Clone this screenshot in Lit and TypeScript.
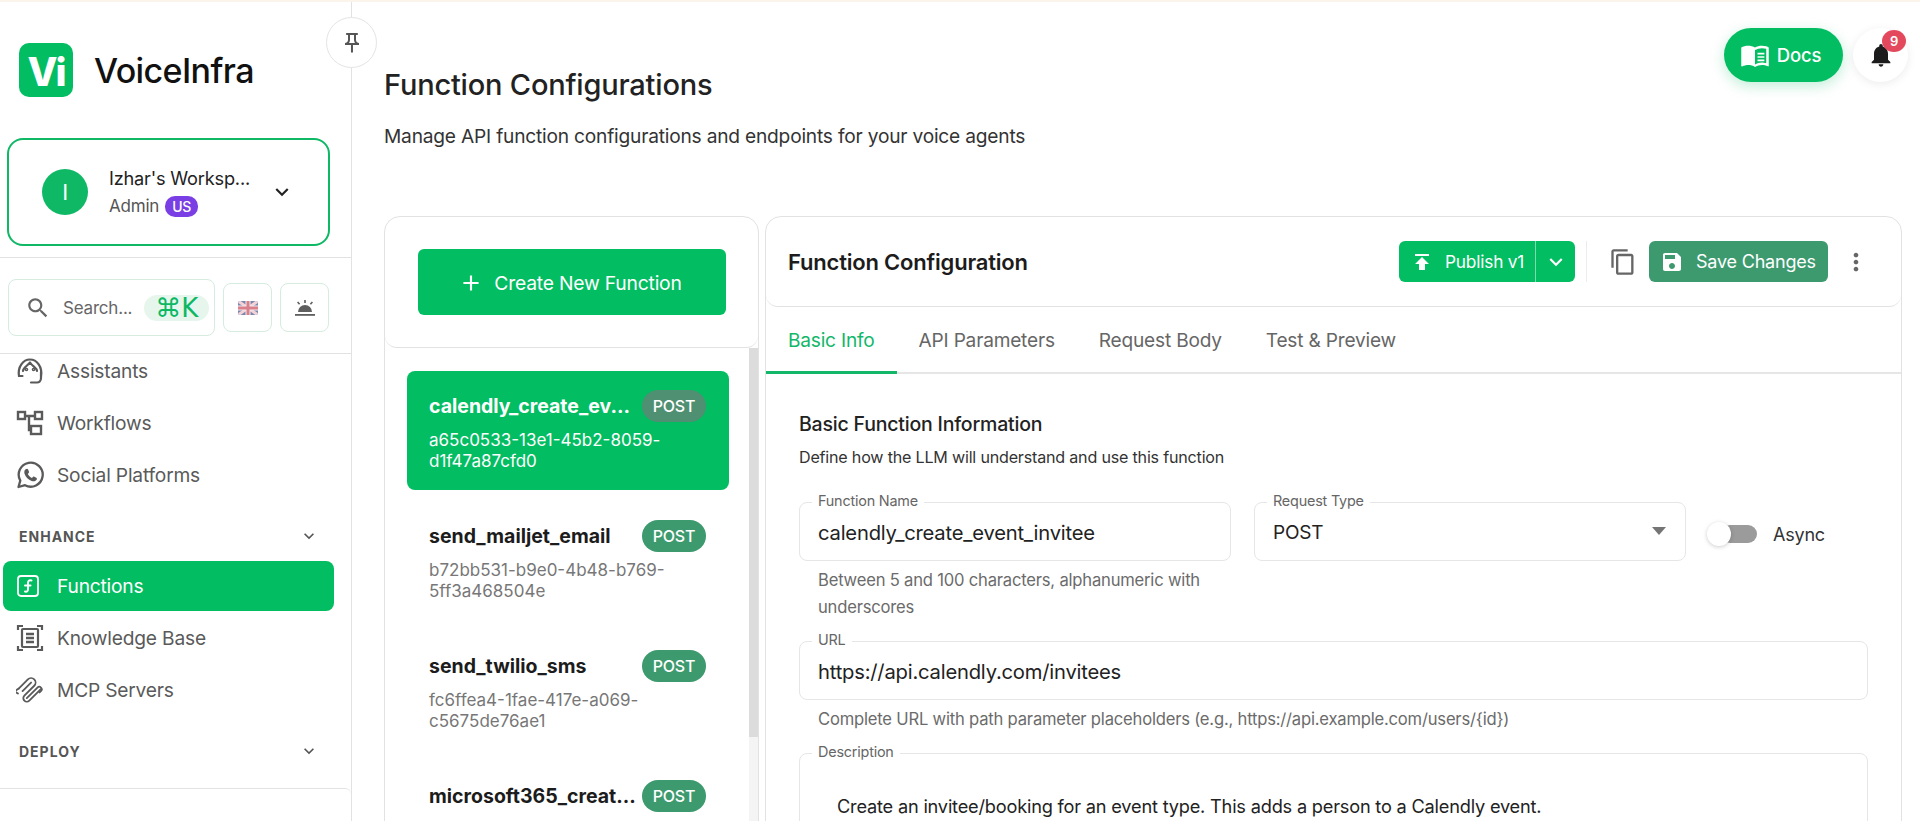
import { LitElement, html, css, svg } from 'lit';
import { customElement } from 'lit/decorators.js';

const mi = (d: string, size = 24, fill = 'currentColor') =>
  html`<svg width=${size} height=${size} viewBox="0 0 24 24" fill=${fill}>${svg`<path d=${d}></path>`}</svg>`;

const P = {
  search: 'M15.5 14h-.79l-.28-.27C15.41 12.59 16 11.11 16 9.5 16 5.91 13.09 3 9.5 3S3 5.91 3 9.5 5.91 16 9.5 16c1.61 0 3.09-.59 4.23-1.57l.27.28v.79l5 4.99L20.49 19l-4.99-5zm-6 0C7.01 14 5 11.99 5 9.5S7.01 5 9.5 5 14 7.01 14 9.5 11.99 14 9.5 14z',
  chevron: 'M16.59 8.59 12 13.17 7.41 8.59 6 10l6 6 6-6z',
  publish: 'M5 4v2h14V4H5zm0 10h4v6h6v-6h4l-7-7-7 7z',
  save: 'M17 3H5c-1.11 0-2 .9-2 2v14c0 1.1.89 2 2 2h14c1.1 0 2-.9 2-2V7l-4-4zm-5 16c-1.66 0-3-1.34-3-3s1.34-3 3-3 3 1.34 3 3-1.34 3-3 3zm3-10H5V5h10v4z',
  copy: 'M16 1H4c-1.1 0-2 .9-2 2v14h2V3h12V1zm3 4H8c-1.1 0-2 .9-2 2v14c0 1.1.9 2 2 2h11c1.1 0 2-.9 2-2V7c0-1.1-.9-2-2-2zm0 16H8V7h11v14z',
  more: 'M12 8c1.1 0 2-.9 2-2s-.9-2-2-2-2 .9-2 2 .9 2 2 2zm0 2c-1.1 0-2 .9-2 2s.9 2 2 2 2-.9 2-2-.9-2-2-2zm0 6c-1.1 0-2 .9-2 2s.9 2 2 2 2-.9 2-2-.9-2-2-2z',
  bell: 'M12 22c1.1 0 2-.9 2-2h-4c0 1.1.89 2 2 2zm6-6v-5c0-3.07-1.64-5.64-4.5-6.32V4c0-.83-.67-1.5-1.5-1.5s-1.5.67-1.5 1.5v.68C7.63 5.36 6 7.92 6 11v5l-2 2v1h16v-1l-2-2z',
  add: 'M19 13h-6v6h-2v-6H5v-2h6V5h2v6h6v2z',
  book: 'M21 5c-1.11-.35-2.33-.5-3.5-.5-1.95 0-4.05.4-5.5 1.5-1.45-1.1-3.55-1.5-5.5-1.5S2.45 4.9 1 6v14.65c0 .25.25.5.5.5.1 0 .15-.05.25-.05C3.1 20.45 5.05 20 6.5 20c1.95 0 4.05.4 5.5 1.5 1.35-.85 3.8-1.5 5.5-1.5 1.65 0 3.35.3 4.75 1.05.1.05.15.05.25.05.25 0 .5-.25.5-.5V6c-.6-.45-1.25-.75-2-1zm0 13.5c-1.1-.35-2.3-.5-3.5-.5-1.7 0-4.15.65-5.5 1.5V8c1.35-.85 3.8-1.5 5.5-1.5 1.2 0 2.4.15 3.5.5v11.5zM14 10.2h5.5v1.3H14zm0 2.7h5.5v1.3H14zm0 2.7h5.5v1.3H14z',
  pin: 'M14 4v5c0 1.12.37 2.16 1 3H9c.65-.86 1-1.9 1-3V4h4m3-2H7c-.55 0-1 .45-1 1s.45 1 1 1h1v5c0 1.66-1.34 3-3 3v2h5.97v7l1 1 1-1v-7H19v-2c-1.66 0-3-1.34-3-3V4h1c.55 0 1-.45 1-1s-.45-1-1-1z',
};

const navIcons = {
  assistant: html`<svg width="28" height="28" viewBox="0 0 28 28" fill="none" stroke="currentColor" stroke-width="2.2" stroke-linecap="round" stroke-linejoin="round"><path d="M3 19c-1.500-9 4-16.500 11-16.500S26.500 10 25 19"></path><path d="M7 14c0-3 3-4 7-8.500 3 4.500 7 5.500 7 8.500"></path><path d="M3 19h3.500M25 15v6c0 3-2 4.500-4 4.500h-6"></path><circle cx="10.500" cy="12.500" r=".7"></circle><circle cx="17.500" cy="12.500" r=".7"></circle></svg>`,
  workflow: html`<svg width="28" height="28" viewBox="0 0 28 28" fill="none" stroke="currentColor" stroke-width="2.4"><rect x="2" y="3" width="7" height="7"></rect><rect x="19" y="3" width="7" height="7"></rect><rect x="15" y="17" width="10" height="8"></rect><path d="M9 7h10M13 7v14h2"></path></svg>`,
  social: html`<svg width="28" height="28" viewBox="0 0 28 28" fill="none" stroke="currentColor" stroke-width="2.3"><path d="M2.500 26l1.800-6.400A12 12 0 1 1 9 24.200z" stroke-linejoin="round"></path><path d="M9.500 8.500c1-1 2.200-1 2.600 0l.9 2.200c.2.500 0 1-.4 1.400l-.8.900c.9 1.800 2.300 3.100 4.100 4l1-1c.4-.4.900-.5 1.400-.3l2 1c.8.500.8 1.600.1 2.400-1.200 1.400-3 1.500-4.800.8-3.300-1.300-5.800-3.800-7-7-.6-1.700-.2-3.200.5-4.400z" fill="currentColor" stroke="none"></path></svg>`,
  fn: html`<svg width="28" height="28" viewBox="0 0 28 28" fill="none" stroke="currentColor" stroke-width="1.800" stroke-linecap="round"><rect x="2" y="4" width="20" height="20" rx="3"></rect><path d="M15.500 8.500c-2.500-.8-3.500.5-3.500 2.500v6c0 2-1 3-3 2.500M9 13.500h5.500" stroke-width="2"></path></svg>`,
  knowledge: html`<svg width="28" height="28" viewBox="0 0 28 28" fill="none" stroke="currentColor" stroke-width="2.200"><path d="M2 6V2h5M21 2h5v4M2 22v4h5M21 26h5v-4"></path><rect x="6" y="5" width="16" height="18" rx="1"></rect><path d="M10 10h8M10 14h8M10 18h8" stroke-width="2.400"></path></svg>`,
  mcp: html`<svg width="28" height="28" viewBox="0 0 28 28" fill="none" stroke="currentColor" stroke-width="1.800" stroke-linecap="round" stroke-linejoin="round"><g transform="rotate(45 14 14)"><path d="M5 21V8a4.500 4.500 0 0 1 9 0v14a3.500 3.500 0 0 0 7 0V6"></path><path d="M9.500 20V8M17.500 22V7a2.500 2.500 0 0 1 5 0v2"></path><path d="M5 21l-1 5 4-1"></path></g></svg>`,
};

const navTop = [
  { icon: navIcons.assistant, label: 'Assistants' },
  { icon: navIcons.workflow, label: 'Workflows' },
  { icon: navIcons.social, label: 'Social Platforms' },
];

const fns = [
  { name: 'calendly_create_ev...', id: 'a65c0533-13e1-45b2-8059-d1f47a87cfd0', active: true },
  { name: 'send_mailjet_email', id: 'b72bb531-b9e0-4b48-b769-5ff3a468504e' },
  { name: 'send_twilio_sms', id: 'fc6ffea4-1fae-417e-a069-c5675de76ae1' },
  { name: 'microsoft365_creat...', id: '' },
];

@customElement('app-root')
export class AppRoot extends LitElement {
  static styles = css`
    :host {
      display: flex;
      width: 1920px;
      height: 821px;
      overflow: hidden;
      box-sizing: border-box;
      border-top: 2px solid #fbf4ea;
      background: #fff;
      font-family: Inter, 'Noto Sans', sans-serif;
      color: #1a1a1a;
      letter-spacing: -0.2px;
    }
    * { box-sizing: border-box; }
    svg { display: block; flex: none; }

    /* sidebar */
    .side {
      position: relative;
      flex: none;
      width: 352px;
      display: flex;
      flex-direction: column;
      border-right: 1px solid #e2e2e2;
    }
    .pin {
      position: absolute;
      top: 15px;
      left: 326px;
      width: 51px;
      height: 51px;
      border-radius: 50%;
      border: 1px solid #e4e4e4;
      background: #fff;
      display: flex;
      align-items: center;
      justify-content: center;
      color: #555;
      z-index: 2;
    }
    .brand {
      display: flex;
      align-items: center;
      gap: 21px;
      padding: 41px 0 0 19px;
      margin-bottom: 41px;
    }
    .logo {
      width: 54px;
      height: 54px;
      border-radius: 10px;
      background: #03bd62;
      color: #fff;
      font-weight: 800;
      font-size: 39px;
      letter-spacing: -2px;
      padding-top: 2px;
      display: flex;
      align-items: center;
      justify-content: center;
    }
    .brand-name {
      font-size: 34px;
      font-weight: 500;
      color: #111;
      letter-spacing: -0.6px;
    }
    .ws {
      margin-left: 7px;
      width: 323px;
      height: 108px;
      border: 2px solid #0fb865;
      border-radius: 16px;
      display: flex;
      align-items: center;
      padding-left: 33px;
    }
    .avatar {
      width: 46px;
      height: 46px;
      border-radius: 50%;
      background: #0fb865;
      color: #fff;
      font-size: 22px;
      font-weight: 400;
      display: flex;
      align-items: center;
      justify-content: center;
      margin-right: 21px;
    }
    .ws-text { width: 151px; }
    .ws-name {
      font-size: 18.200px;
      color: #222;
      white-space: nowrap;
      margin-bottom: 7px;
    }
    .ws-role {
      display: flex;
      align-items: center;
      gap: 6px;
      font-size: 17px;
      line-height: 21px;
      color: #555;
    }
    .us {
      background: #7a3fe4;
      color: #fff;
      font-size: 14px;
      font-weight: 500;
      border-radius: 10px;
      padding: 0 7px;
      height: 21px;
      line-height: 21px;
    }
    .ws-chev { margin-left: 9px; color: #222; }
    .tools {
      margin-top: 11px;
      border-top: 1px solid #e2e2e2;
      border-bottom: 1px solid #e2e2e2;
      padding: 21px 0 17px 8px;
      display: flex;
      align-items: center;
      gap: 8px;
      height: 97px;
    }
    .search {
      width: 207px;
      height: 57px;
      border: 1.5px solid #d5ecdf;
      border-radius: 8px;
      display: flex;
      align-items: center;
      padding-left: 16px;
      color: #666;
    }
    .search span.ph {
      font-size: 17px;
      margin: 1px 0 0 12px;
      color: #666;
      white-space: nowrap;
    }
    .kbd {
      margin-left: 12px;
      width: 65px;
      height: 26px;
      border-radius: 13px;
      background: #e6f6ec;
      color: #0db864;
      font-family: 'DejaVu Sans', sans-serif;
      font-size: 26px;
      line-height: 26px;
      text-align: center;
      white-space: nowrap;
      letter-spacing: 0;
      flex: none;
    }
    .tool-btn {
      width: 49px;
      height: 49px;
      border: 1.5px solid #d5ecdf;
      border-radius: 8px;
      display: flex;
      align-items: center;
      justify-content: center;
      color: #555;
    }
    .nav { flex: 1; overflow: hidden; min-height: 0; }
    .nav-in { margin-top: -9px; }
    .item {
      height: 52px;
      display: flex;
      align-items: center;
      gap: 13px;
      padding-left: 16px;
      font-size: 19.200px;
      color: #5a5a5a;
    }
    .item.active {
      height: 50px;
      margin: 1px 17px 1px 3px;
      padding-left: 13px;
      border-radius: 8px;
      background: #03bd62;
      color: #fff;
    }
    .section {
      height: 48px;
      margin-top: 11px;
      display: flex;
      align-items: center;
      justify-content: space-between;
      padding: 0 32px 0 19px;
      font-size: 14px;
      font-weight: 700;
      letter-spacing: 1px;
      color: #555;
    }
    .section svg { color: #555; }
    .side-foot {
      flex: none;
      height: 33px;
      border-top: 1px solid #e2e2e2;
      border-top-right-radius: 6px;
    }

    /* main */
    .main {
      flex: 1;
      min-width: 0;
      padding-left: 32px;
      padding-right: 18px;
    }
    .top {
      height: 214px;
      display: flex;
      justify-content: space-between;
    }
    .title {
      margin: 65px 0 0;
      font-size: 29px;
      line-height: 36px;
      font-weight: 500;
      color: #222;
    }
    .subtitle {
      margin: 19px 0 0;
      font-size: 19.150px;
      line-height: 28px;
      color: #333;
    }
    .top-actions {
      display: flex;
      gap: 10px;
      margin: 26px -6px 0 0;
      height: 54px;
    }
    .docs {
      width: 119px;
      height: 54px;
      padding-right: 6px;
      border-radius: 27px;
      background: #03bd62;
      color: #fff;
      font-size: 18.500px;
      font-weight: 500;
      display: flex;
      align-items: center;
      justify-content: center;
      gap: 7px;
      box-shadow: 0 4px 14px rgba(3, 189, 98, 0.25);
    }
    .bell {
      position: relative;
      width: 55px;
      height: 54px;
      border-radius: 50%;
      background: #fff;
      box-shadow: 0 2px 10px rgba(0, 0, 0, 0.08);
      display: flex;
      align-items: center;
      justify-content: center;
      color: #1c1c1c;
    }
    .badge {
      position: absolute;
      top: 2px;
      right: 2px;
      width: 24px;
      height: 22px;
      border-radius: 50%;
      background: #e3485c;
      color: #fff;
      font-size: 13px;
      font-weight: 600;
      text-align: center;
      line-height: 22px;
    }
    .panels { display: flex; gap: 6px; height: 640px; }
    .panel {
      border: 1px solid #e2e2e2;
      border-radius: 16px;
      background: #fff;
      overflow: hidden;
    }
    .left {
      flex: none;
      width: 375px;
      display: flex;
      flex-direction: column;
    }
    .left-head {
      flex: none;
      height: 131px;
      padding: 32px 0 0 33px;
      border-bottom: 1px solid #e2e2e2;
      border-radius: 0 0 12px 12px;
    }
    .create {
      width: 308px;
      height: 66px;
      padding: 2px 4px 0 0;
      border-radius: 6px;
      background: #03bd62;
      color: #fff;
      font-size: 19.300px;
      display: flex;
      align-items: center;
      justify-content: center;
      gap: 10px;
    }
    .list {
      position: relative;
      flex: 1;
      min-height: 0;
      overflow: hidden;
      padding: 23px 0 0 22px;
    }
    .track {
      position: absolute;
      top: 0;
      right: 0;
      bottom: 0;
      width: 9px;
      background: #f4f4f4;
    }
    .thumb { height: 389px; background: #dcdcdc; }
    .fn {
      width: 322px;
      height: 119px;
      margin-bottom: 11px;
      padding: 19px 23px 0 22px;
      border-radius: 8px;
      color: #777;
    }
    .fn.on { background: #03bd62; color: #fff; }
    .fn-row { display: flex; align-items: center; gap: 6px; }
    .fn-name {
      flex: 1;
      min-width: 0;
      font-size: 19.500px;
      font-weight: 700;
      letter-spacing: 0;
      color: #1c1c1c;
      white-space: nowrap;
    }
    .fn.on .fn-name { color: #fff; }
    .post {
      flex: none;
      width: 64px;
      height: 32px;
      border-radius: 16px;
      background: #3c9a6e;
      color: #fff;
      font-size: 16px;
      font-weight: 500;
      line-height: 32px;
      text-align: center;
    }
    .fn.on .post { background: #4f8f72; }
    .fn-id {
      margin-top: 8px;
      font-size: 17px;
      letter-spacing: 0;
      line-height: 21px;
      width: 270px;
    }
    .right {
      flex: 1;
      min-width: 0;
    }
    .right-head {
      height: 90px;
      display: flex;
      align-items: center;
      padding: 0 0 0 22px;
      border-bottom: 1px solid #e2e2e2;
      border-radius: 0 0 12px 12px;
    }
    .right-title { font-size: 22px; font-weight: 600; color: #1c1c1c; }
    .acts { margin-left: auto; display: flex; align-items: center; }
    .pub {
      display: flex;
      width: 176px;
      height: 41px;
      border-radius: 6px;
      background: #03bd62;
      color: #fff;
      overflow: hidden;
      font-size: 17.300px;
    }
    .pub-main {
      width: 137px;
      display: flex;
      align-items: center;
      gap: 11px;
      padding-left: 11px;
      border-right: 1px solid #7ddcae;
      white-space: nowrap;
    }
    .pub-arrow { flex: 1; display: flex; align-items: center; justify-content: center; }
    .sep { width: 1px; height: 41px; margin: 0 22px 0 11px; background: #ececec; }
    .copy { color: #666; margin-right: 9px; }
    .savebtn {
      width: 179px;
      height: 41px;
      border-radius: 6px;
      background: #3d9a6f;
      color: #fff;
      font-size: 18px;
      display: flex;
      align-items: center;
      gap: 12px;
      padding-left: 11px;
      margin-left: 3px;
      white-space: nowrap;
    }
    .dots { color: #666; margin: 0 31px 0 14px; }
    .tabs {
      display: flex;
      height: 67px;
      border-bottom: 2px solid #e6e6e6;
    }
    .tab {
      padding: 0 22px;
      font-size: 19.100px;
      line-height: 66px;
      color: #666;
      height: 67px;
    }
    .tab.on {
      color: #12b76a;
      border-bottom: 3px solid #12b76a;
    }
    .body { padding: 37px 33px 0 33px; }
    .h {
      margin: 0;
      font-size: 19.500px;
      line-height: 26px;
      font-weight: 500;
      color: #222;
    }
    .d {
      margin: 8px 0 0;
      font-size: 16.100px;
      line-height: 24px;
      color: #333;
    }
    .row {
      display: grid;
      grid-template-columns: 432px 432px auto;
      column-gap: 23px;
      margin-top: 33px;
      align-items: start;
    }
    .field {
      position: relative;
      height: 59px;
      padding: 1px 0 0 18px;
      border: 1.5px solid #e6e6e6;
      border-radius: 8px;
      display: flex;
      align-items: center;
      font-size: 20.200px;
      color: #222;
    }
    .field label {
      position: absolute;
      top: -11px;
      left: 12px;
      padding: 0 6px;
      background: #fff;
      font-size: 14.400px;
      line-height: 18px;
      color: #666;
    }
    .select { font-size: 19px; }
    .caret {
      position: absolute;
      right: 19px;
      top: 24px;
      width: 0;
      height: 0;
      border-left: 7px solid transparent;
      border-right: 7px solid transparent;
      border-top: 8px solid #757575;
    }
    .help {
      margin: 6px 0 0;
      padding-left: 19px;
      font-size: 16.600px;
      line-height: 27px;
      color: #6b6b6b;
    }
    .sw {
      display: flex;
      align-items: center;
      height: 59px;
      margin-left: -2px;
      padding-top: 5px;
      font-size: 18px;
      color: #333;
    }
    .sw-track {
      position: relative;
      width: 50px;
      height: 18px;
      margin-right: 16px;
    }
    .sw-bar {
      position: absolute;
      right: 0;
      top: 0;
      width: 36px;
      height: 18px;
      border-radius: 9px;
      background: #9b9b9b;
    }
    .sw-thumb {
      position: absolute;
      left: 0;
      top: -3px;
      width: 24px;
      height: 24px;
      border-radius: 50%;
      background: #fff;
      box-shadow: 0 1px 4px rgba(0, 0, 0, 0.2);
    }
    .mt { margin-top: 20px; }
    .desc {
      align-items: flex-start;
      height: 200px;
      padding: 40px 0 0 37px;
      font-size: 18.200px;
      line-height: 24px;
    }
  `;

  render() {
    return html`
      <aside class="side">
        <div class="pin">${mi(P.pin, 24)}</div>
        <div class="brand">
          <div class="logo">Vi</div>
          <div class="brand-name">VoiceInfra</div>
        </div>
        <div class="ws">
          <div class="avatar">I</div>
          <div class="ws-text">
            <div class="ws-name">Izhar's Worksp...</div>
            <div class="ws-role">Admin <span class="us">US</span></div>
          </div>
          <div class="ws-chev">${mi(P.chevron, 26)}</div>
        </div>
        <div class="tools">
          <div class="search">
            ${mi(P.search, 26)}
            <span class="ph">Search...</span>
            <span class="kbd">⌘K</span>
          </div>
          <div class="tool-btn">
            <svg width="20" height="14" viewBox="0 0 20 14" style="border-radius:2px">
              <rect width="20" height="14" fill="#7d88ad"></rect>
              <path d="M0 0l20 14M20 0L0 14" stroke="#f3d3d8" stroke-width="3"></path>
              <path d="M10 0v14M0 7h20" stroke="#f3e9ea" stroke-width="5"></path>
              <path d="M10 0v14M0 7h20" stroke="#d9808c" stroke-width="3"></path>
            </svg>
          </div>
          <div class="tool-btn">
            <svg width="22" height="18" viewBox="0 0 22 18" fill="#5f5f5f">
              <path d="M4 13a7 7 0 0 1 14 0z"></path>
              <rect x="1" y="15" width="20" height="1.800"></rect>
              <rect x="10.200" y="1" width="1.600" height="3"></rect>
              <path d="M3 3.500l1.200-1 2 2.200-1.200 1zM19 3.500l-1.200-1-2 2.200 1.200 1z"></path>
            </svg>
          </div>
        </div>
        <nav class="nav">
          <div class="nav-in">
            ${navTop.map((n) => html`<div class="item">${n.icon}<span>${n.label}</span></div>`)}
            <div class="section">ENHANCE ${mi(P.chevron, 20)}</div>
            <div class="item active">${navIcons.fn}<span>Functions</span></div>
            <div class="item">${navIcons.knowledge}<span>Knowledge Base</span></div>
            <div class="item">${navIcons.mcp}<span>MCP Servers</span></div>
            <div class="section">DEPLOY ${mi(P.chevron, 20)}</div>
          </div>
        </nav>
        <div class="side-foot"></div>
      </aside>

      <main class="main">
        <header class="top">
          <div>
            <h1 class="title">Function Configurations</h1>
            <p class="subtitle">Manage API function configurations and endpoints for your voice agents</p>
          </div>
          <div class="top-actions">
            <div class="docs">${mi(P.book, 30)}<span>Docs</span></div>
            <div class="bell">${mi(P.bell, 28)}<span class="badge">9</span></div>
          </div>
        </header>

        <div class="panels">
          <section class="panel left">
            <div class="left-head">
              <div class="create">${mi(P.add, 26)}<span>Create New Function</span></div>
            </div>
            <div class="list">
              ${fns.map(
                (f) => html`
                  <div class="fn ${f.active ? 'on' : ''}">
                    <div class="fn-row">
                      <div class="fn-name">${f.name}</div>
                      <div class="post">POST</div>
                    </div>
                    ${f.id ? html`<div class="fn-id">${f.id}</div>` : ''}
                  </div>
                `
              )}
              <div class="track"><div class="thumb"></div></div>
            </div>
          </section>

          <section class="panel right">
            <div class="right-head">
              <div class="right-title">Function Configuration</div>
              <div class="acts">
                <div class="pub">
                  <div class="pub-main">${mi(P.publish, 24)}<span>Publish v1</span></div>
                  <div class="pub-arrow">${mi(P.chevron, 26)}</div>
                </div>
                <div class="sep"></div>
                <div class="copy">${mi(P.copy, 28)}</div>
                <div class="savebtn">${mi(P.save, 24)}<span>Save Changes</span></div>
                <div class="dots">${mi(P.more, 28)}</div>
              </div>
            </div>
            <div class="tabs">
              <div class="tab on">Basic Info</div>
              <div class="tab">API Parameters</div>
              <div class="tab">Request Body</div>
              <div class="tab">Test &amp; Preview</div>
            </div>
            <div class="body">
              <h3 class="h">Basic Function Information</h3>
              <p class="d">Define how the LLM will understand and use this function</p>
              <div class="row">
                <div>
                  <div class="field"><label>Function Name</label>calendly_create_event_invitee</div>
                  <p class="help">Between 5 and 100 characters, alphanumeric with underscores</p>
                </div>
                <div class="field select"><label>Request Type</label>POST<span class="caret"></span></div>
                <div class="sw">
                  <div class="sw-track"><div class="sw-bar"></div><div class="sw-thumb"></div></div>
                  Async
                </div>
              </div>
              <div class="field mt"><label>URL</label>https://api.calendly.com/invitees</div>
              <p class="help">Complete URL with path parameter placeholders (e.g., https://api.example.com/users/{id})</p>
              <div class="field mt desc"><label>Description</label>Create an invitee/booking for an event type. This adds a person to a Calendly event.</div>
            </div>
          </section>
        </div>
      </main>
    `;
  }
}
